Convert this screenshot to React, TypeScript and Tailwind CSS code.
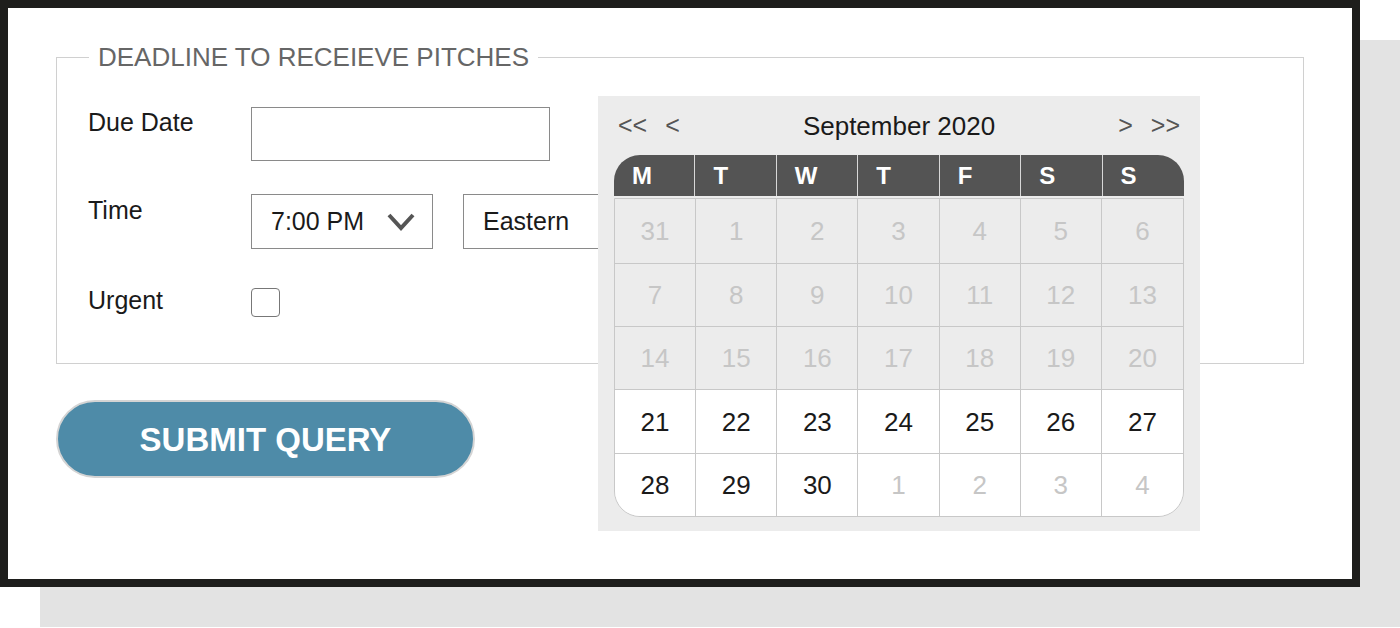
const weekDays = ["M", "T", "W", "T", "F", "S", "S"];

type Day = { day: number; current: boolean };

const weeks: { shaded: boolean; rowClass: string; days: Day[] }[] = [
  { shaded: true, rowClass: "h-[64px]", days: [31, 1, 2, 3, 4, 5, 6].map((d) => ({ day: d, current: false })) },
  { shaded: true, rowClass: "h-[63px] border-t", days: [7, 8, 9, 10, 11, 12, 13].map((d) => ({ day: d, current: false })) },
  { shaded: true, rowClass: "h-[63px] border-t", days: [14, 15, 16, 17, 18, 19, 20].map((d) => ({ day: d, current: false })) },
  { shaded: false, rowClass: "h-[64px] border-t", days: [21, 22, 23, 24, 25, 26, 27].map((d) => ({ day: d, current: true })) },
  {
    shaded: false,
    rowClass: "h-[63px] border-t",
    days: [28, 29, 30, 1, 2, 3, 4].map((d, i) => ({ day: d, current: i < 3 })),
  },
];

const Calendar = () => {
  return (
    <div className="absolute left-[590px] top-[88px] w-[602px] h-[435px] bg-[#ececec] px-[16px]">
      <div className="h-[59px] flex items-center justify-between px-[4px] text-[25px] leading-[25px] text-[#555]">
        <div className="flex gap-[18px]">
          <span>&lt;&lt;</span>
          <span>&lt;</span>
        </div>
        <div className="text-[#1a1a1a] text-[26px] leading-[26px]">September 2020</div>
        <div className="flex gap-[18px]">
          <span>&gt;</span>
          <span>&gt;&gt;</span>
        </div>
      </div>

      <div className="grid grid-cols-7 h-[41px] bg-[#545454] rounded-t-[26px] overflow-hidden">
        { weekDays.map( ( d, i ) => (
          <div
            key={ i }
            className={ `flex items-center pl-[18px] text-white font-bold text-[24px] leading-[24px] ${i < 6 ? "border-r border-[#d8d8d8]" : ""}` }
          >
            { d }
          </div>
        ) ) }
      </div>

      <div className="mt-[2px] border border-[#c8c8c8] rounded-b-[26px] overflow-hidden">
        { weeks.map( ( week, w ) => (
          <div
            key={ w }
            className={ `grid grid-cols-7 border-[#c8c8c8] ${week.rowClass} ${week.shaded ? "bg-[#ececec]" : "bg-white"}` }
          >
            { week.days.map( ( d, i ) => (
              <div
                key={ i }
                className={ `flex items-center justify-center text-[26px] leading-[26px] ${i < 6 ? "border-r border-[#c8c8c8]" : ""} ${d.current ? "text-[#1a1a1a]" : "text-[#c6c6c6]"}` }
              >
                { d.day }
              </div>
            ) ) }
          </div>
        ) ) }
      </div>
    </div>
  );
};

const App = () => {
  return (
    <div className="w-[1400px] h-[628px] bg-white font-['Liberation_Sans',Arial,sans-serif]">
      <div className="relative w-[1360px] h-[587px] border-8 border-[#1e1e1c] bg-white shadow-[40px_40px_0_0_#e3e3e3] pt-[34px] px-[48px]">
        <fieldset className="border border-[#d0d0d0] pl-[31px] pt-[35px] pb-[46px]">
          <legend className="ml-[1px] px-[9px] text-[26px] leading-[30px] text-[#666]">
            DEADLINE TO RECEIEVE PITCHES
          </legend>

          <div className="flex items-start">
            <label className="w-[163px] pt-[3px] text-[25px] leading-[25px] text-[#1a1a1a]">Due Date</label>
            <div className="w-[299px] h-[54px] border border-[#8a8a8a] bg-white" />
          </div>

          <div className="flex items-start mt-[33px]">
            <label className="w-[163px] pt-[4px] text-[25px] leading-[25px] text-[#1a1a1a]">Time</label>
            <div className="flex gap-[30px]">
              <div className="w-[182px] h-[55px] border border-[#8a8a8a] flex items-center justify-between pl-[19px] pr-[17px] text-[25px] leading-[25px] text-[#1a1a1a]">
                <span>7:00 PM</span>
                <svg width="28" height="20" viewBox="0 0 28 20" fill="none">
                  <polyline points="2,3 14,16 26,3" stroke="#555" strokeWidth="4" strokeLinejoin="miter" />
                </svg>
              </div>
              <div className="w-[300px] h-[55px] border border-[#8a8a8a] flex items-center pl-[19px] text-[25px] leading-[25px] text-[#1a1a1a]">
                Eastern
              </div>
            </div>
          </div>

          <div className="flex items-start mt-[39px]">
            <label className="w-[163px] text-[25px] leading-[25px] text-[#1a1a1a]">Urgent</label>
            <div className="w-[29px] h-[29px] border border-[#777] rounded-[4px] bg-white" />
          </div>
        </fieldset>

        <button className="mt-[36px] w-[419px] h-[78px] rounded-full border-2 border-[#d4d4d4] bg-[#4e8ba8] text-white font-bold text-[33px] leading-[33px] flex items-center justify-center">
          SUBMIT QUERY
        </button>

        <Calendar />
      </div>
    </div>
  );
};

export default App;
